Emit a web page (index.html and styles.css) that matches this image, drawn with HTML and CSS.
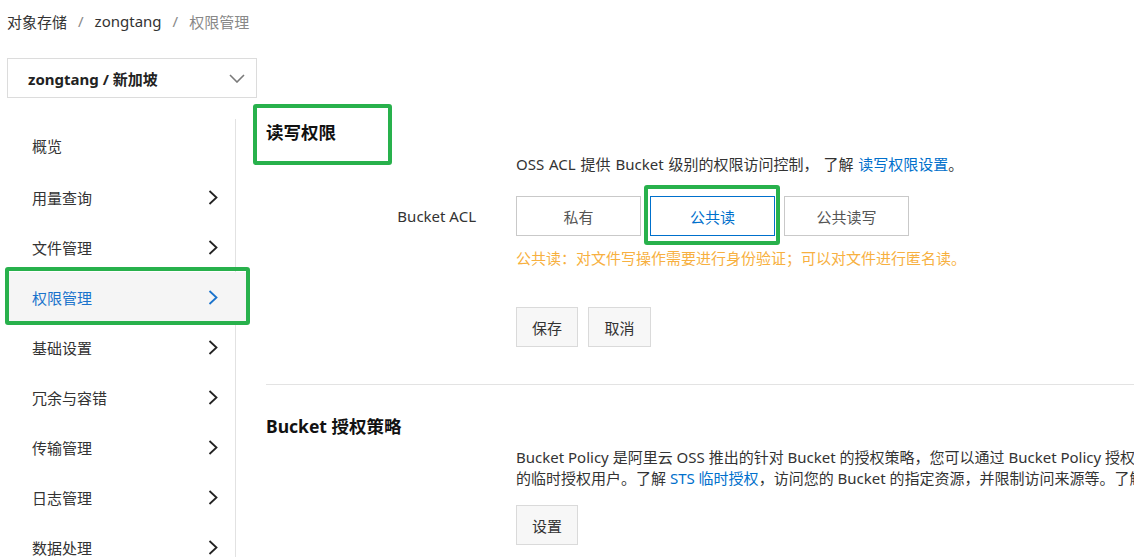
FILE: index.html
```html
<!DOCTYPE html>
<html lang="zh-CN">
<head>
<meta charset="utf-8">
<title>权限管理</title>
<link rel="stylesheet" href="styles.css">
</head>
<body>
<div class="app">
  <div class="breadcrumb">
    <span class="crumb">对象存储</span><span class="sep">/</span><span class="crumb">zongtang</span><span class="sep">/</span><span class="crumb current">权限管理</span>
  </div>
  <div class="layout">
    <aside class="side">
      <div class="bucket-select">
        <span class="bucket-name">zongtang / 新加坡</span>
        <svg class="caret" width="16" height="9" viewBox="0 0 16 9"><polyline points="1,1 8,8 15,1" fill="none" stroke="#7a7a7a" stroke-width="1.6"/></svg>
      </div>
      <nav class="nav">
        <div class="nav-item first">概览</div>
        <div class="nav-item">用量查询<svg class="arrow" width="10" height="15" viewBox="0 0 10 15"><polyline points="1.5,1 8.5,7.5 1.5,14" fill="none" stroke="currentColor" stroke-width="1.8"/></svg></div>
        <div class="nav-item">文件管理<svg class="arrow" width="10" height="15" viewBox="0 0 10 15"><polyline points="1.5,1 8.5,7.5 1.5,14" fill="none" stroke="currentColor" stroke-width="1.8"/></svg></div>
        <div class="nav-item active">权限管理<svg class="arrow" width="10" height="15" viewBox="0 0 10 15"><polyline points="1.5,1 8.5,7.5 1.5,14" fill="none" stroke="currentColor" stroke-width="1.8"/></svg></div>
        <div class="nav-item">基础设置<svg class="arrow" width="10" height="15" viewBox="0 0 10 15"><polyline points="1.5,1 8.5,7.5 1.5,14" fill="none" stroke="currentColor" stroke-width="1.8"/></svg></div>
        <div class="nav-item">冗余与容错<svg class="arrow" width="10" height="15" viewBox="0 0 10 15"><polyline points="1.5,1 8.5,7.5 1.5,14" fill="none" stroke="currentColor" stroke-width="1.8"/></svg></div>
        <div class="nav-item">传输管理<svg class="arrow" width="10" height="15" viewBox="0 0 10 15"><polyline points="1.5,1 8.5,7.5 1.5,14" fill="none" stroke="currentColor" stroke-width="1.8"/></svg></div>
        <div class="nav-item">日志管理<svg class="arrow" width="10" height="15" viewBox="0 0 10 15"><polyline points="1.5,1 8.5,7.5 1.5,14" fill="none" stroke="currentColor" stroke-width="1.8"/></svg></div>
        <div class="nav-item">数据处理<svg class="arrow" width="10" height="15" viewBox="0 0 10 15"><polyline points="1.5,1 8.5,7.5 1.5,14" fill="none" stroke="currentColor" stroke-width="1.8"/></svg></div>
      </nav>
    </aside>
    <main class="main">
      <section class="section acl">
        <h2 class="section-title">读写权限</h2>
        <div class="row">
          <div class="label"></div>
          <div class="content desc">OSS ACL 提供 Bucket 级别的权限访问控制， 了解 <a class="link">读写权限设置</a>。</div>
        </div>
        <div class="row acl-row">
          <div class="label">Bucket ACL</div>
          <div class="content">
            <div class="radio-group">
              <div class="radio">私有</div>
              <div class="radio selected">公共读</div>
              <div class="radio">公共读写</div>
            </div>
          </div>
        </div>
        <div class="row warn-row">
          <div class="label"></div>
          <div class="content warn">公共读：对文件写操作需要进行身份验证；可以对文件进行匿名读。</div>
        </div>
        <div class="row actions-row">
          <div class="label"></div>
          <div class="content actions">
            <div class="btn save">保存</div>
            <div class="btn cancel">取消</div>
          </div>
        </div>
      </section>
      <div class="divider"></div>
      <section class="section policy">
        <h2 class="section-title">Bucket 授权策略</h2>
        <div class="row">
          <div class="label"></div>
          <div class="content para">
            <div class="line">Bucket Policy 是阿里云 OSS 推出的针对 Bucket 的授权策略，您可以通过 Bucket Policy 授权其他用户访问您指定的 OSS 资源，例如授权其他阿里云账号、匿名用户、RAM 子用户或通过 STS 获取</div>
            <div class="line">的临时授权用户。了解 <a class="link">STS 临时授权</a>，访问您的 Bucket 的指定资源，并限制访问来源等。了解 <a class="link">Bucket Policy 设置</a>。</div>
          </div>
        </div>
        <div class="row set-row">
          <div class="label"></div>
          <div class="content">
            <div class="btn set">设置</div>
          </div>
        </div>
      </section>
    </main>
  </div>
</div>
<div class="mark mark-title"></div>
<div class="mark mark-radio"></div>
<div class="mark mark-nav"></div>
</body>
</html>
```

FILE: styles.css
```css
html, body {
  margin: 0;
  padding: 0;
  width: 1134px;
  height: 557px;
  overflow: hidden;
  background: #fff;
}

body {
  font-family: "Noto Sans", "Noto Sans CJK SC", sans-serif;
  font-size: 15px;
  color: #333;
  position: relative;
}

.app {
  padding-left: 7px;
}

.breadcrumb {
  height: 42px;
  display: flex;
  align-items: center;
  white-space: nowrap;
}

.crumb {
  color: #333;
}

.crumb.current {
  color: #888;
}

.sep {
  color: #888;
  margin: 0 11px;
}

.layout {
  display: flex;
  align-items: flex-start;
}

.side {
  width: 250px;
  flex: none;
  padding-top: 16px;
}

.bucket-select {
  height: 38px;
  border: 1px solid #dcdcdc;
  display: flex;
  align-items: center;
  justify-content: space-between;
  padding: 0 11px 0 20px;
}

.bucket-name {
  font-weight: 700;
  color: #222;
}

.nav {
  margin-top: 21px;
  width: 228px;
  border-right: 1px solid #e2e2e2;
  padding-bottom: 40px;
}

.nav-item {
  height: 50px;
  display: flex;
  align-items: center;
  justify-content: space-between;
  padding: 0 17px 0 25px;
  color: #333;
  white-space: nowrap;
}

.nav-item.first {
  height: 53px;
}

.nav-item .arrow {
  color: #222;
}

.nav-item.active {
  background: #f5f5f5;
  color: #1a73cc;
  box-shadow: 12px 0 0 0 #f5f5f5;
}

.nav-item.active .arrow {
  color: #1a73cc;
}

.main {
  margin-left: 9px;
  flex: none;
  width: 1400px;
  padding-top: 78px;
}

.section-title {
  margin: 0;
  font-size: 17.5px;
  line-height: 24px;
  font-weight: 700;
  color: #111;
  white-space: nowrap;
}

.row {
  display: flex;
  align-items: center;
}

.label {
  width: 210px;
  padding-right: 40px;
  flex: none;
  text-align: right;
  color: #333;
  white-space: nowrap;
}

.content {
  flex: 1;
  white-space: nowrap;
}

.desc {
  margin-top: 10px;
  line-height: 20px;
  word-spacing: 1px;
}

.link {
  color: #0070cc;
  text-decoration: none;
}

.acl-row {
  margin-top: 22px;
}

.radio-group {
  display: flex;
  gap: 9px;
}

.radio {
  width: 123px;
  height: 38px;
  border: 1px solid #c9c9c9;
  display: flex;
  align-items: center;
  justify-content: center;
  color: #555;
  background: #fff;
}

.radio.selected {
  border-color: #0070cc;
  color: #0070cc;
}

.warn-row {
  margin-top: 12px;
}

.warn {
  color: #f7b040;
  line-height: 20px;
}

.actions-row {
  margin-top: 39px;
}

.actions {
  display: flex;
  gap: 10px;
}

.btn {
  height: 38px;
  border: 1px solid #dadada;
  background: #f7f7f7;
  display: flex;
  align-items: center;
  justify-content: center;
  color: #333;
}

.btn.save,
.btn.set {
  width: 60px;
}

.btn.cancel {
  width: 61px;
}

.divider {
  margin-top: 37px;
  height: 1px;
  background: #e3e3e3;
}

.policy .section-title {
  margin-top: 29px;
}

.para {
  margin-top: 9px;
  line-height: 21px;
  overflow: hidden;
}

.set-row {
  margin-top: 16px;
}

.mark {
  position: absolute;
  border: 4px solid #28b14c;
  border-radius: 3px;
  box-sizing: border-box;
  pointer-events: none;
}

.mark-title {
  left: 253px;
  top: 104px;
  width: 139px;
  height: 61px;
}

.mark-radio {
  left: 644px;
  top: 185px;
  width: 136px;
  height: 60px;
}

.mark-nav {
  left: 5px;
  top: 267px;
  width: 245px;
  height: 58px;
}
```
